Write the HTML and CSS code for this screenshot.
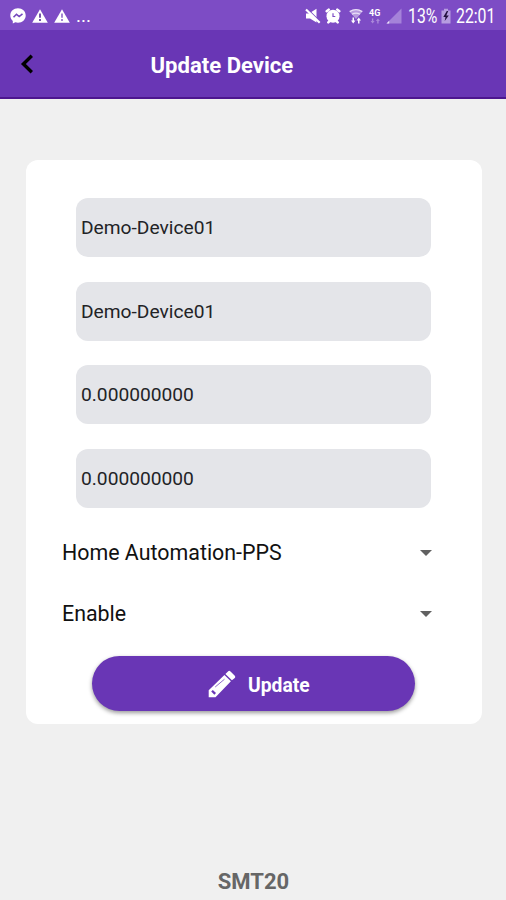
FILE: index.html
```html
<!DOCTYPE html>
<html lang="en">

<head>
  <meta charset="UTF-8">
  <meta name="viewport" content="width=device-width, initial-scale=1.0">
  <title>Update Device</title>
  <link rel="stylesheet" href="styles.css">
</head>

<body>
  <div class="status">
    <!-- messenger -->
    <svg class="messenger" width="16" height="16" viewBox="0 0 16 16">
      <path fill="#fff" d="M8 .3C3.6.3.3 3.4.3 7.5c0 2.200.9 4 2.500 5.400v2.500l2.500-1.100c.9.2 1.700.4 2.700.4 4.400 0 7.700-3.100 7.700-7.200S12.400.3 8 .3z" />
      <path fill="none" stroke="#7549bd" stroke-width="1.600" d="M3.500 9.300l3-3 2.700 2.200 3.300-2.700" />
    </svg>
    <!-- warnings -->
    <svg class="warning" width="16" height="14" viewBox="0 0 16 14">
      <path fill="#fff" d="M8 .3L15.800 13.700H.2z" />
      <path stroke="#65409f" stroke-width="1.800" d="M8 4.500v4.300M8 10.100v1.800" />
    </svg>
    <svg class="warning" width="16" height="14" viewBox="0 0 16 14">
      <path fill="#fff" d="M8 .3L15.800 13.700H.2z" />
      <path stroke="#9b79cf" stroke-width="1.800" d="M8 4.500v4.300M8 10.100v1.800" />
    </svg>
    <span class="more">...</span>

    <div class="system">
      <!-- muted -->
      <svg class="mute" width="16" height="16" viewBox="0 0 16 16">
        <path fill="#fff" d="M1 5.500h3L11.500.8v13.700L5 10.500H1z" />
        <path stroke="#7d4cc5" stroke-width="1.200" d="M2.500.8l13 13" />
        <path stroke="#fff" stroke-width="2.200" d="M1 1.500l13.700 13.300" />
      </svg>
      <!-- alarm -->
      <svg class="alarm" width="16" height="16" viewBox="0 0 16 16">
        <path stroke="#fff" stroke-width="2.500" stroke-linecap="round" d="M1.700 3.300l2-1.700M14.300 3.300l-2-1.700M3.300 14.300l2-2M12.700 14.300l-2-2" />
        <circle cx="8" cy="8.200" r="6.500" fill="#fff" />
        <path fill="none" stroke="#7d4cc5" stroke-width="1.200" d="M8 5.300v3.200h2.300" />
      </svg>
      <!-- wifi -->
      <svg class="wifi" width="14" height="16" viewBox="0 0 14 16">
        <path fill="#b89bdf" d="M.5 3.500Q7-.9 13.500 3.500L7 11z" />
        <path fill="none" stroke="#e9def8" stroke-width="1.300" d="M.7 3.600Q7-.4 13.300 3.600M3 6.300q4-2.400 8 0" />
        <path fill="#fff" d="M5 9.500v3h1.500L4.200 15.500 2 12.500h1.500v-3zM9 15.500v-3H7.500l2.300-3 2.200 3h-1.500v3z" />
      </svg>
      <!-- mobile data -->
      <div class="data">
        <span>4G</span>
        <svg width="12" height="6" viewBox="0 0 12 6">
          <path fill="#aa87da" d="M4.300.500v2.500h1.300l-2 2.500-2-2.500h1.300V.5zM8.200 5.500V3H6.900l2-2.500 2 2.500H9.600v2.500z" />
        </svg>
      </div>
      <!-- signal -->
      <svg class="signal" width="16" height="16" viewBox="0 0 16 16">
        <path fill="#a582d9" d="M15.500.5v15H.5z" />
        <path fill="#eee5fa" d="M3.200 12.800v2.700H.5z" />
      </svg>
      <span class="percent">13%</span>
      <!-- battery -->
      <svg class="battery" width="10" height="16" viewBox="0 0 10 16">
        <path fill="#b79de0" d="M3 .7h4v1.800h2.500v13H.5v-13H3z" />
        <path fill="#24113f" d="M5.800 3L2.300 9h2.200L3.700 13 7.800 7.400H5.300L7.200 3z" />
      </svg>
      <span class="clock">22:01</span>
    </div>
  </div>

  <header class="header">
    <svg class="back" width="14" height="20" viewBox="0 0 14 20">
      <path fill="none" stroke="#000" stroke-width="3.400" d="M11.800 1.800L3.400 10l8.400 8.200" />
    </svg>
    <h1 class="title">Update Device</h1>
  </header>

  <main class="card">
    <div class="fields">
      <input class="field" type="text" value="Demo-Device01">
      <input class="field" type="text" value="Demo-Device01">
      <input class="field" type="text" value="0.000000000">
      <input class="field" type="text" value="0.000000000">
    </div>
    <div class="select">
      <span>Home Automation-PPS</span>
      <i class="arrow"></i>
    </div>
    <div class="select">
      <span>Enable</span>
      <i class="arrow"></i>
    </div>
    <button class="update">
      <svg class="pencil" width="28" height="28" viewBox="0 0 28 28">
        <path fill="#fff" d="M.7 20.300L16.400 4.900l6.500 6.300L7.500 27.200H.7zM17.400 4L20 1.400q1.200-1.200 2.500 0l4.300 4.300q1.100 1.200 0 2.400L23.900 10.300z" />
        <path fill="none" stroke="#8f6bc9" stroke-width="1" d="M7.200 17L16.500 9.200" />
        <path stroke="#6936b5" stroke-width="2.300" d="M4 20.700l3.200 3.200" />
      </svg>
      <span class="label">Update</span>
    </button>
  </main>

  <footer class="footer">SMT20</footer>
</body>

</html>
```
FILE: styles.css
```css
* {
  box-sizing: border-box;
}

body {
  display: flex;
  flex-direction: column;
  height: 900px;
  margin: 0;
  overflow: hidden;
  font-family: Roboto, sans-serif;
  background: #f0f0f0;
}

.status {
  display: flex;
  align-items: center;
  height: 30px;
  padding: 1px 10px 0 10px;
  color: #fff;
  background: #7d4cc5;
}

.status svg {
  flex: none;
}

.warning {
  margin-left: 6px;
}

.more {
  margin-left: 6px;
  font-size: 19px;
  line-height: 20px;
}

.system {
  display: flex;
  align-items: center;
  margin-left: auto;
}

.alarm {
  margin-left: 4px;
}

.wifi {
  margin-left: 8px;
}

.data {
  display: flex;
  flex-direction: column;
  width: 13px;
  margin-left: 6px;
  font-size: 9px;
  font-weight: 700;
  line-height: 10px;
}

.signal {
  margin-left: 4px;
}

/* narrow digits of the status bar */
.percent,
.clock {
  font-size: 20px;
  line-height: 24px;
  white-space: nowrap;
  transform: scaleX(0.79);
  transform-origin: left center;
}

.percent {
  margin: 1px -7px 0 6px;
}

.battery {
  margin-left: 3px;
}

.clock {
  margin: 1px -10px 0 5px;
}

.header {
  display: flex;
  align-items: center;
  height: 69px;
  padding-left: 20px;
  border-bottom: 2px solid #4d168f;
  background: #6936b5;
}

.title {
  margin: 3px 0 0 116.5px;
  color: #fff;
  font-size: 22.1px;
  font-weight: 700;
  line-height: 26px;
}

.card {
  display: flex;
  flex-direction: column;
  width: 456px;
  height: 564px;
  margin: 61px 0 0 26px;
  padding-top: 38px;
  border-radius: 12px;
  background: #fff;
}

.fields {
  display: flex;
  flex-direction: column;
  gap: 24.7px;
  margin: 0 51px 14px 50px;
}

.field {
  width: 100%;
  height: 59px;
  padding: 0 5px;
  border: none;
  border-radius: 12px;
  outline: none;
  color: #222326;
  font-family: inherit;
  font-size: 19.2px;
  background: #e4e5e9;
}

.select {
  display: flex;
  align-items: center;
  justify-content: space-between;
  height: 61px;
  padding: 0 50px 0 36px;
  color: #111;
  font-size: 21.4px;
}

.arrow {
  border: 6px solid transparent;
  border-top-color: #616161;
  border-bottom: none;
}

.update {
  display: flex;
  align-items: center;
  width: 323px;
  height: 55px;
  margin: 12px 0 0 66px;
  padding: 1px 0 0 116px;
  border: none;
  border-radius: 28px;
  color: #fff;
  font-family: inherit;
  font-size: 19.3px;
  font-weight: 700;
  background: #6936b5;
  box-shadow: 0 2px 4px rgba(0, 0, 0, 0.4);
}

.pencil {
  margin-right: 12px;
}

.label {
  padding-top: 3px;
}

.footer {
  margin: auto 0 6px 1px;
  color: #666;
  font-size: 22px;
  font-weight: 700;
  text-align: center;
}
```
